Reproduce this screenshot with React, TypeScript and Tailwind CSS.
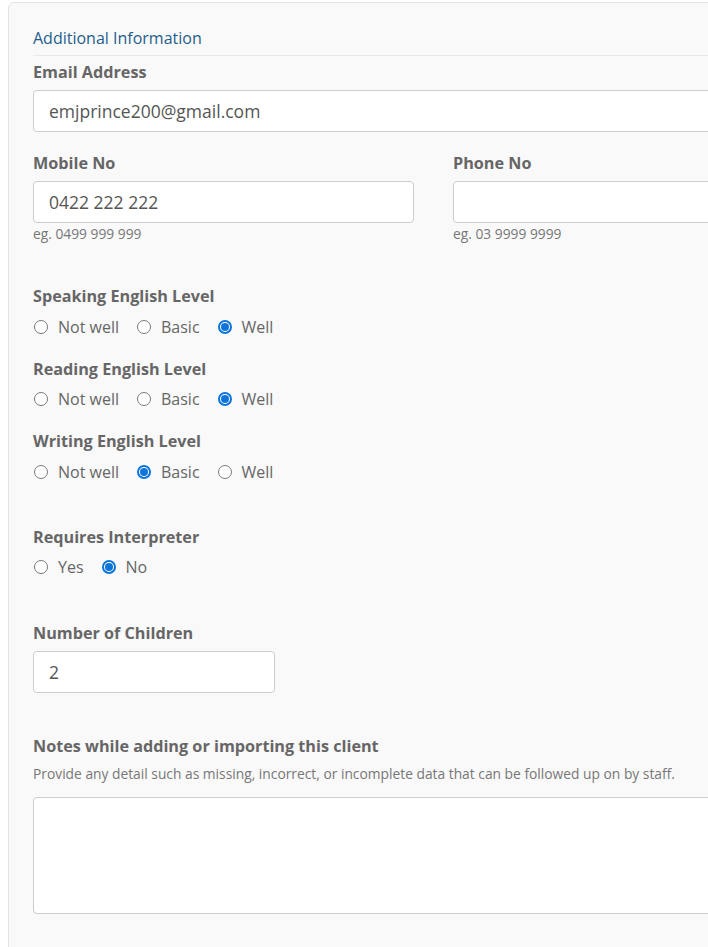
import React from "react";

const font = { fontFamily: '"Open Sans", "Liberation Sans", sans-serif' };

function Label({ children, className = "" }: { children: React.ReactNode; className?: string }) {
  return (
    <div className={`text-[16.2px] leading-[24px] font-bold text-[#666666] ${className}`}>{children}</div>
  );
}

function Radio({ checked }: { checked?: boolean }) {
  return checked ? (
    <span className="inline-flex h-[14px] w-[14px] items-center justify-center rounded-full border-[2px] border-[#0b74d8] bg-white">
      <span className="h-[8px] w-[8px] rounded-full bg-[#0b74d8]" />
    </span>
  ) : (
    <span className="inline-block h-[14px] w-[14px] rounded-full border border-[#7a7a7a] bg-white" />
  );
}

function RadioGroup({ options, selected, className = "" }: { options: string[]; selected: string; className?: string }) {
  return (
    <div className={`flex items-center h-[24px] ${className}`}>
      {options.map((o) => (
        <label key={o} className="flex items-center mr-[17px]">
          <span className="ml-[1px] mr-[10px] flex items-center">
            <Radio checked={o === selected} />
          </span>
          <span className="text-[16px] leading-[24px] text-[#666666]">{o}</span>
        </label>
      ))}
    </div>
  );
}

export default function App() {
  return (
    <div className="w-[708px] h-[947px] overflow-hidden bg-white" style={font}>
      <div className="ml-[8px] mt-[2px] w-[780px] h-[960px] bg-[#f9f9f9] border border-[#e3e3e3] rounded-tl-[6px] pl-[24px] pt-[23px]">
        <div className="text-[16px] leading-[24px] text-[#1e5d8c]">Additional Information</div>
        <div className="mt-[5px] h-px bg-[#e8e8e8]" />
        <Label className="mt-[4px]">Email Address</Label>
        <div className="mt-[6px] h-[42px] w-[740px] rounded-[4px] border border-[#cccccc] bg-white flex items-center pl-[15px] text-[17.5px] text-[#555555]">
          emjprince200@gmail.com
        </div>
        <div className="mt-[19px] grid grid-cols-[381px_381px] gap-x-[39px]">
          <div>
            <Label>Mobile No</Label>
            <div className="mt-[6px] h-[42px] rounded-[4px] border border-[#cccccc] bg-white flex items-center pl-[15px] text-[17.5px] text-[#555555]">
              0422 222 222
            </div>
            <div className="mt-[2px] text-[13.8px] leading-[18px] text-[#777777]">eg. 0499 999 999</div>
          </div>
          <div>
            <Label>Phone No</Label>
            <div className="mt-[6px] h-[42px] rounded-[4px] border border-[#cccccc] bg-white" />
            <div className="mt-[2px] text-[13.8px] leading-[18px] text-[#777777]">eg. 03 9999 9999</div>
          </div>
        </div>
        <Label className="mt-[41px]">Speaking English Level</Label>
        <RadioGroup className="mt-[7px]" options={["Not well", "Basic", "Well"]} selected="Well" />
        <Label className="mt-[18px]">Reading English Level</Label>
        <RadioGroup className="mt-[6px]" options={["Not well", "Basic", "Well"]} selected="Well" />
        <Label className="mt-[18px]">Writing English Level</Label>
        <RadioGroup className="mt-[7px]" options={["Not well", "Basic", "Well"]} selected="Basic" />
        <Label className="mt-[41px]">Requires Interpreter</Label>
        <RadioGroup className="mt-[6px]" options={["Yes", "No"]} selected="No" />
        <Label className="mt-[42px]">Number of Children</Label>
        <div className="mt-[6px] h-[42px] w-[242px] rounded-[4px] border border-[#cccccc] bg-white flex items-center pl-[15px] text-[17.5px] text-[#555555]">
          2
        </div>
        <Label className="mt-[41px]">Notes while adding or importing this client</Label>
        <div className="mt-[7px] text-[13.8px] leading-[18px] text-[#777777]">
          Provide any detail such as missing, incorrect, or incomplete data that can be followed up on by staff.
        </div>
        <div className="mt-[14px] h-[117px] w-[740px] rounded-[4px] border border-[#cccccc] bg-white" />
      </div>
    </div>
  );
}
